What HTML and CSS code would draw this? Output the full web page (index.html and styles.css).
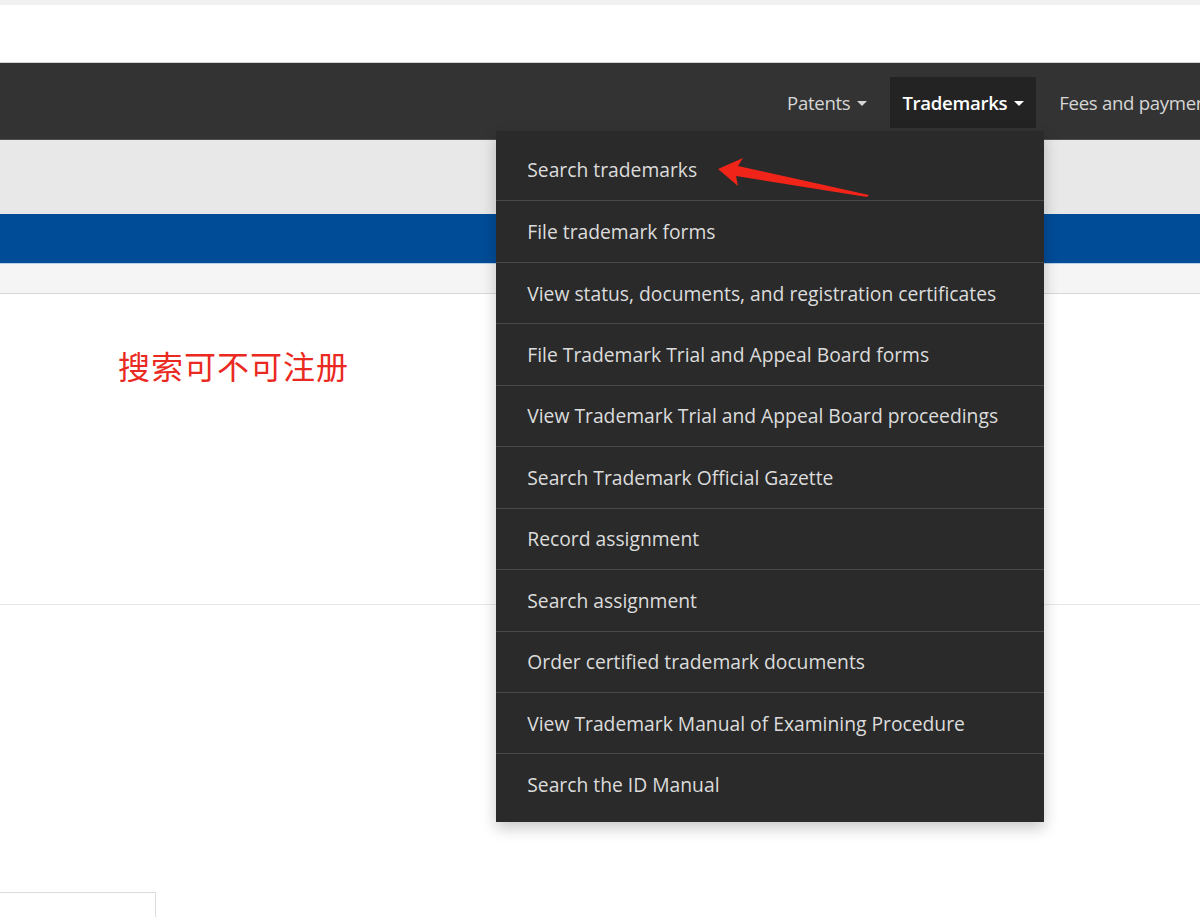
FILE: index.html
```html
<!DOCTYPE html>
<html lang="en">
<head>
<meta charset="utf-8">
<title>Trademarks</title>
<link rel="stylesheet" href="styles.css">
</head>
<body>
<div class="topstrip"></div>
<div class="whitehead"></div>
<nav class="mainnav">
  <ul class="navlist">
    <li class="navitem">Patents <span class="caret"></span></li>
    <li class="navitem active">Trademarks <span class="caret"></span>
      <ul class="dropdown">
        <li>Search trademarks</li>
        <li>File trademark forms</li>
        <li>View status, documents, and registration certificates</li>
        <li>File Trademark Trial and Appeal Board forms</li>
        <li>View Trademark Trial and Appeal Board proceedings</li>
        <li>Search Trademark Official Gazette</li>
        <li>Record assignment</li>
        <li>Search assignment</li>
        <li>Order certified trademark documents</li>
        <li>View Trademark Manual of Examining Procedure</li>
        <li>Search the ID Manual</li>
      </ul>
    </li>
    <li class="navitem">Fees and payment <span class="caret"></span></li>
  </ul>
</nav>
<div class="graybar"></div>
<div class="bluebar"></div>
<div class="lightbar"></div>
<main class="content">
  <section class="hero">
    <p class="note">搜索可不可注册</p>
  </section>
  <section class="lower">
    <div class="box"></div>
  </section>
</main>
<svg class="annot-arrow" width="160" height="50" viewBox="0 0 160 50">
  <path d="M2 12 L27 1 L22 9 L153 38 L151 40 L20 19 L22 29 Z" fill="#f02418"/>
</svg>
</body>
</html>
```

FILE: styles.css
```css
* { box-sizing: border-box; }
html, body { margin: 0; padding: 0; }
body {
  width: 1200px;
  height: 917px;
  overflow: hidden;
  background: #fff;
  font-family: "Open Sans", "Noto Sans", Arial, sans-serif;
  position: relative;
}
.topstrip { height: 5px; background: #f1f1f1; }
.whitehead { height: 58px; background: #fff; border-bottom: 1px solid #d4d4d4; }
.mainnav {
  height: 77px;
  background: #333333;
  border-bottom: 1px solid #505050;
}
.navlist {
  list-style: none;
  margin: 0;
  padding: 14px 0 0 775px;
  display: flex;
  gap: 11px;
  white-space: nowrap;
}
.navitem {
  position: relative;
  height: 51px;
  padding: 0 12px;
  display: flex;
  align-items: center;
  gap: 7px;
  color: #d6d6d6;
  font-size: 18.6px;
  letter-spacing: -0.3px;
  flex-shrink: 0;
}
.navitem.active {
  background: #232323;
  color: #fff;
  font-weight: 600;
}
.caret {
  display: inline-block;
  width: 0;
  height: 0;
  margin-top: 2px;
  border-left: 5px solid transparent;
  border-right: 5px solid transparent;
  border-top: 5px solid currentColor;
}
.dropdown {
  position: absolute;
  top: 54px;
  right: -8px;
  width: 548px;
  margin: 0;
  padding: 8px 0 7px;
  list-style: none;
  background: #2a2a2a;
  box-shadow: 0 6px 14px rgba(0, 0, 0, 0.22);
  z-index: 5;
}
.dropdown li {
  height: 61.45px;
  display: flex;
  align-items: center;
  padding-left: 31px;
  color: #dcdcdc;
  font-size: 19.3px;
  font-weight: 400;
  letter-spacing: 0;
  border-top: 1px solid #4a4a4a;
}
.dropdown li:first-child { border-top: none; }
.graybar { height: 74px; background: #e8e8e8; }
.bluebar { height: 50px; background: #004c97; border-bottom: 1px solid #b8d2ea; }
.lightbar { height: 30px; background: #f5f5f5; border-bottom: 1px solid #d8d8d8; }
.hero {
  height: 311px;
  border-bottom: 1px solid #e6e6e6;
  padding: 49px 0 0 118px;
}
.note {
  margin: 0;
  color: #ea2a22;
  font-family: "Noto Sans CJK SC", sans-serif;
  font-size: 32px;
  line-height: 44px;
  font-weight: 400;
  letter-spacing: 1px;
}
.lower { padding-top: 287px; }
.box {
  width: 156px;
  height: 40px;
  border: 1px solid #dcdcdc;
  border-left: none;
}
.annot-arrow {
  position: absolute;
  left: 716px;
  top: 157px;
  z-index: 10;
}
```
